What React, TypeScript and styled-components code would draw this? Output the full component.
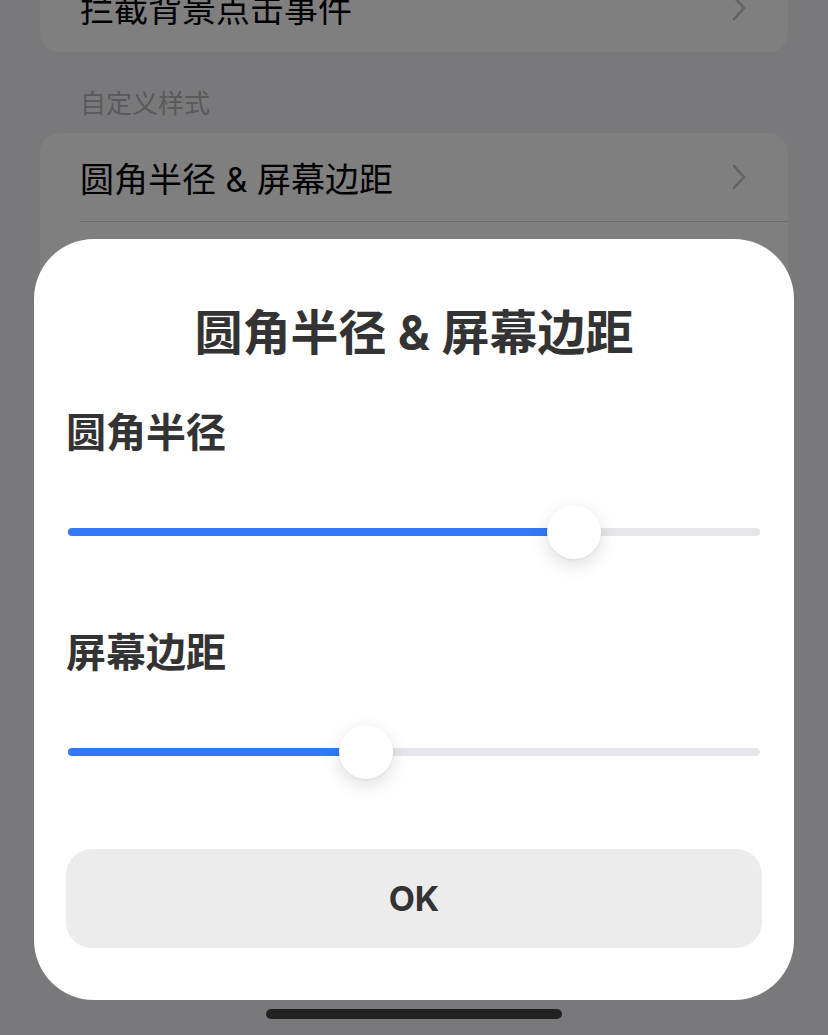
import React from 'react'
import styled, { createGlobalStyle } from 'styled-components'

const colors = {
  pageBg: '#f2f2f7',
  card: '#ffffff',
  text: '#000000',
  dark: '#333333',
  header: '#b4b4b8',
  chevron: '#c4c4c6',
  divider: '#d6d6d8',
  blue: '#3478f6',
  track: '#e5e5ea',
  button: '#ececec',
}

const GlobalStyle = createGlobalStyle`
  html, body {
    margin: 0;
    padding: 0;
    background: ${colors.pageBg};
    font-family: Inter, "Noto Sans CJK SC", sans-serif;
    overflow: hidden;
  }
`

const Page = styled.main`
  display: flex;
  flex-direction: column;
  padding: 0 40px;
  height: 1035px;
  overflow: hidden;
`

const Card = styled.section<{ $first?: boolean }>`
  display: flex;
  flex-direction: column;
  background: ${colors.card};
  border-radius: 20px;
  margin-top: ${({ $first }) => ($first ? '-37px' : '0')};
`

const Row = styled.div<{ $divider?: boolean }>`
  display: flex;
  align-items: center;
  justify-content: space-between;
  height: 89px;
  margin-left: 40px;
  padding-right: 42px;
  box-sizing: border-box;
  font-size: 34px;
  color: ${colors.text};
  border-bottom: ${({ $divider }) => ($divider ? `1px solid ${colors.divider}` : 'none')};
`

const SectionHeader = styled.div`
  margin: 36px 0 13px 40px;
  font-size: 26px;
  line-height: 32px;
  color: ${colors.header};
`

const Overlay = styled.div`
  position: fixed;
  inset: 0;
  background: rgba(0, 0, 0, 0.5);
`

const Sheet = styled.div`
  position: fixed;
  left: 34px;
  right: 34px;
  bottom: 35px;
  display: flex;
  flex-direction: column;
  background: #fff;
  border-radius: 60px;
  padding: 64px 32px 52px;
  color: ${colors.dark};
`

const Title = styled.h2`
  margin: 0 0 44px;
  font-size: 48px;
  line-height: 60px;
  font-weight: 700;
  text-align: center;
`

const Controls = styled.div`
  display: flex;
  flex-direction: column;
  gap: 68px;
`

const Field = styled.div`
  display: flex;
  flex-direction: column;
  gap: 46px;
`

const Label = styled.div`
  font-size: 40px;
  line-height: 52px;
  font-weight: 600;
`

const SliderBox = styled.div`
  position: relative;
  display: flex;
  align-items: center;
  height: 54px;
  margin: 0 2px;
`

const Track = styled.div`
  position: relative;
  flex: 1;
  height: 8px;
  border-radius: 4px;
  background: ${colors.track};
`

const Fill = styled.div`
  height: 100%;
  border-radius: 4px;
  background: ${colors.blue};
`

const Thumb = styled.div`
  position: absolute;
  top: 50%;
  width: 54px;
  height: 54px;
  margin: -27px 0 0 -27px;
  border-radius: 50%;
  background: #fff;
  box-shadow: 0 6px 18px rgba(0, 0, 0, 0.13), 0 1px 3px rgba(0, 0, 0, 0.05);
`

const OkButton = styled.button`
  margin-top: 70px;
  height: 99px;
  border: none;
  border-radius: 26px;
  background: ${colors.button};
  font-family: Inter, "Noto Sans CJK SC", sans-serif;
  font-size: 34px;
  font-weight: 700;
  color: ${colors.dark};
`

const HomeIndicator = styled.div`
  position: fixed;
  left: 266px;
  bottom: 16px;
  width: 296px;
  height: 10px;
  border-radius: 5px;
  background: #222;
`

const Chevron = () => (
  <svg width="14" height="26" viewBox="0 0 14 26" fill="none">
    <path d="M2 2l10 11-10 11" stroke={colors.chevron} strokeWidth="2.6" strokeLinecap="round" strokeLinejoin="round" />
  </svg>
)

const THUMB = 54
const TRACK_WIDTH = 692

const Slider = ({ value, max }: { value: number; max: number }) => {
  const center = THUMB / 2 + (value / max) * (TRACK_WIDTH - THUMB)
  return (
    <SliderBox>
      <Track>
        <Fill style={{ width: center }} />
        <Thumb style={{ left: center }} />
      </Track>
    </SliderBox>
  )
}

export default function App() {
  return (
    <>
      <GlobalStyle />
      <Page>
        <Card $first>
          <Row>
            拦截背景点击事件
            <Chevron />
          </Row>
        </Card>
        <SectionHeader>自定义样式</SectionHeader>
        <Card>
          <Row $divider>
            圆角半径 &amp; 屏幕边距
            <Chevron />
          </Row>
          <Row $divider>
            背景颜色
            <Chevron />
          </Row>
          <Row>
            动画效果
            <Chevron />
          </Row>
        </Card>
      </Page>
      <Overlay />
      <Sheet>
        <Title>圆角半径 &amp; 屏幕边距</Title>
        <Controls>
          <Field>
            <Label>圆角半径</Label>
            <Slider value={24} max={32} />
          </Field>
          <Field>
            <Label>屏幕边距</Label>
            <Slider value={17} max={40} />
          </Field>
        </Controls>
        <OkButton>OK</OkButton>
      </Sheet>
      <HomeIndicator />
    </>
  )
}
